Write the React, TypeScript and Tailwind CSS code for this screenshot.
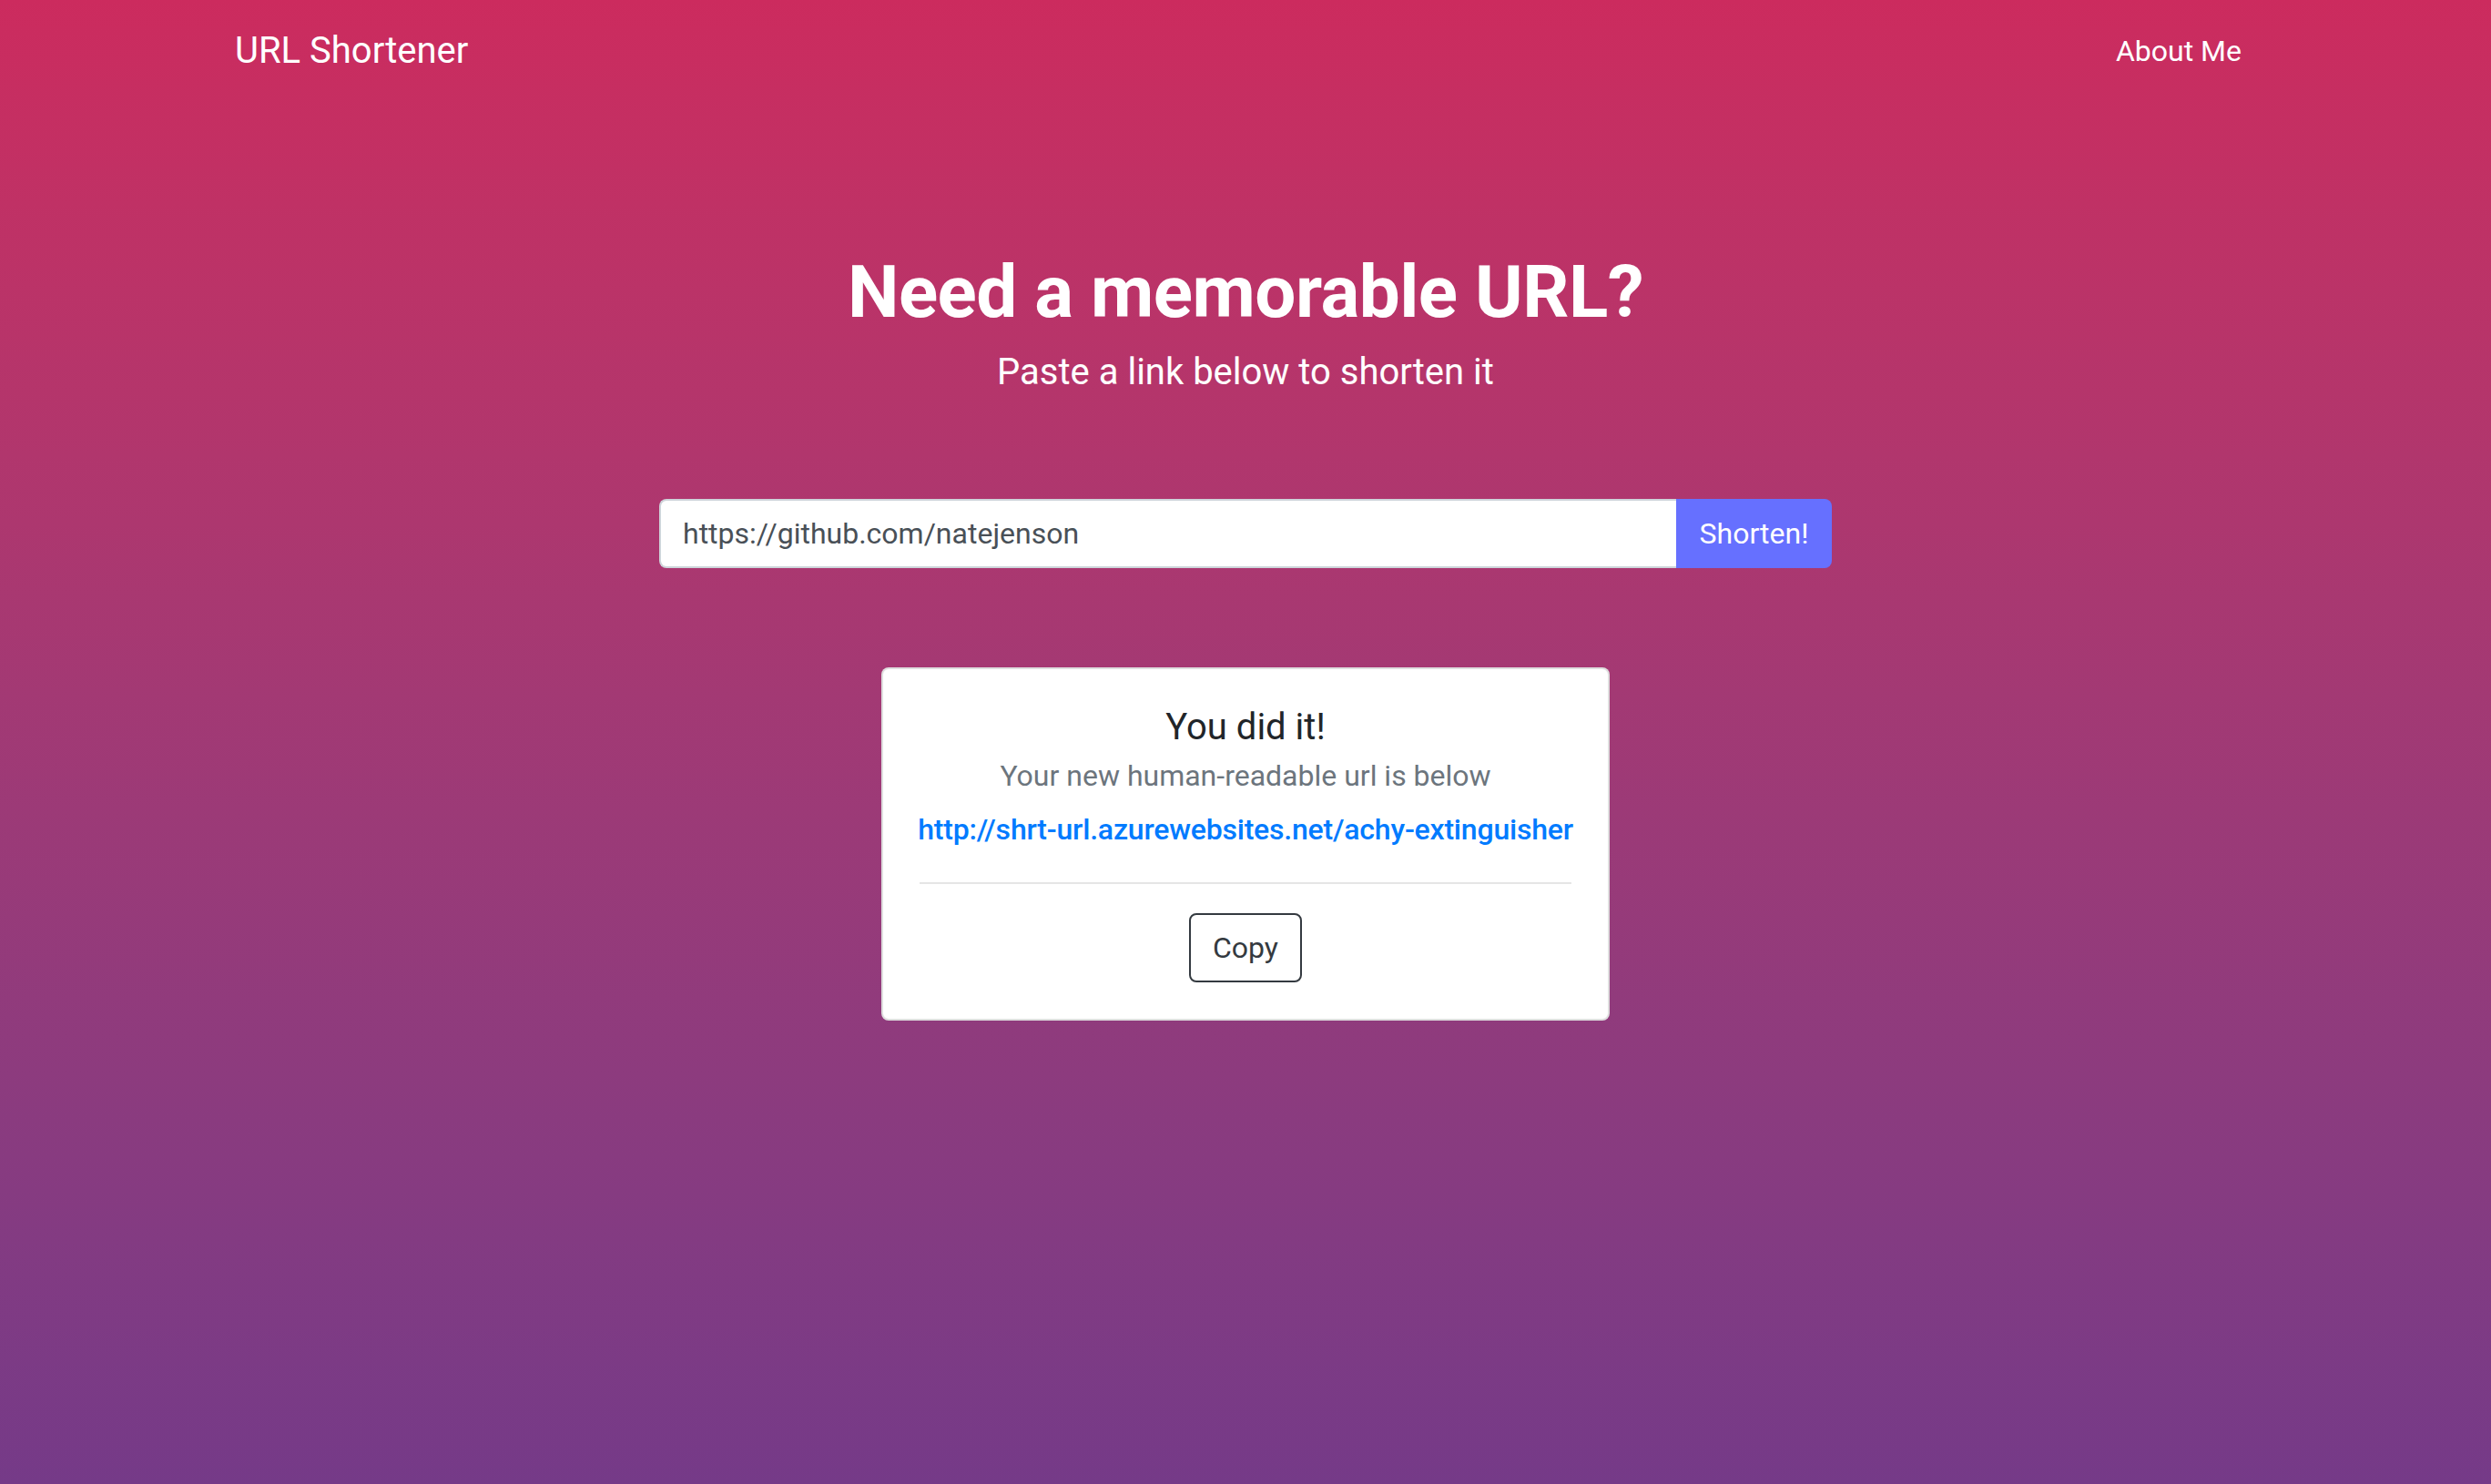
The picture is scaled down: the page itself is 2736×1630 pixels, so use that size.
import React from "react";

export default function App() {
  return (
    <div
      className="min-h-[1630px] w-full bg-gradient-to-b from-[#cc2b5e] to-[#753a88] text-white"
      style={{ fontFamily: "Roboto, 'Liberation Sans', sans-serif" }}
    >
      <nav className="py-[16px]">
        <div className="mx-auto flex w-[2220px] items-center justify-between">
          <a className="py-[10px] text-[40px] leading-[60px] text-white">URL Shortener</a>
          <a className="px-[16px] py-[16px] text-[32px] leading-[48px] text-white">About Me</a>
        </div>
      </nav>

      <div className="mt-[161px] flex flex-col items-center">
        <h1 className="text-[80px] font-bold leading-[96px] tracking-[-0.5px]">Need a memorable URL?</h1>
        <h2 className="mt-[16px] text-[40px] font-normal leading-[48px]">Paste a link below to shorten it</h2>

        <div className="mt-[115px] flex h-[76px] w-[1288px]">
          <input
            readOnly
            value="https://github.com/natejenson"
            className="h-full flex-1 rounded-l-[8px] border-2 border-r-0 border-[#ced4da] bg-white px-[24px] text-[32px] text-[#495057] outline-none"
            style={{ fontFamily: "Roboto, 'Liberation Sans', sans-serif" }}
          />
          <button className="h-full w-[171px] rounded-r-[8px] bg-[#6670ff] text-[32px] text-white">
            Shorten!
          </button>
        </div>

        <div className="mt-[109px] flex w-[800px] flex-col items-center rounded-[8px] border-2 border-[rgba(0,0,0,0.125)] bg-white p-[40px] text-center">
          <h5 className="text-[40px] font-normal leading-[48px] text-[#212529]">You did it!</h5>
          <h6 className="mt-[10px] text-[32px] font-normal leading-[38px] text-[#6c757d]">
            Your new human-readable url is below
          </h6>
          <a className="mt-[16px] whitespace-nowrap text-[32px] font-medium leading-[48px] tracking-[-0.2px] text-[#007bff]">
            http://shrt-url.azurewebsites.net/achy-extinguisher
          </a>
          <hr className="mb-[32px] mt-[34px] w-full border-t-2 border-[rgba(0,0,0,0.1)]" />
          <button className="h-[76px] rounded-[8px] border-2 border-[#343a40] px-[24px] text-[32px] leading-[48px] text-[#343a40]">
            Copy
          </button>
        </div>
      </div>
    </div>
  );
}
